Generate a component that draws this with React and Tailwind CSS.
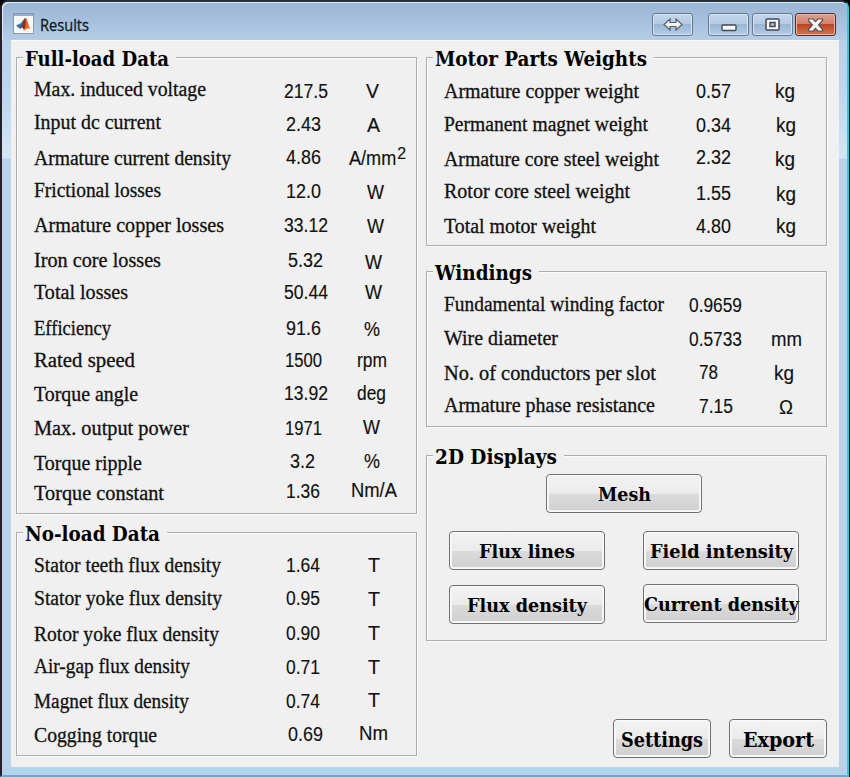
import { useLayoutEffect, useRef, useState } from "react";

const SERIF = "font-['Liberation_Serif',serif] text-[20px]";
const SANS = "font-['Liberation_Sans',sans-serif] text-[19.5px] [-webkit-text-stroke:0.15px_#111]";
const SLAB = "font-['DejaVu_Serif',serif] font-bold";

// Text condensed or widened horizontally to fill a given width.
function Fit({ w, className = "", children }) {
  const ref = useRef(null);
  const [scale, setScale] = useState(1);
  useLayoutEffect(() => {
    ref.current.style.transform = "none";
    const s = w / ref.current.getBoundingClientRect().width;
    ref.current.style.transform = `scaleX(${s})`;
    setScale(s);
  }, [w]);
  return (
    <span className="inline-block text-left" style={{ width: w }}>
      <span
        ref={ref}
        className={`inline-block origin-left whitespace-nowrap ${className}`}
        style={{ transform: `scaleX(${scale})` }}
      >
        {children}
      </span>
    </span>
  );
}

// label, width, baseline | value, x, width, baseline | unit, x, width, baseline
const fullLoad = [
  ["Max. induced voltage", 172, 96, "217.5", 284, 44, 98, "V", 366, 13, 98],
  ["Input dc current", 127, 129, "2.43", 286, 35, 131, "A", 367, 13, 132],
  ["Armature current density", 197, 165, "4.86", 286, 35, 164, "A/mm2", 349, 57, 165],
  ["Frictional losses", 127, 197, "12.0", 286, 35, 198, "W", 367, 17, 199],
  ["Armature copper losses", 190, 232, "33.12", 284, 44, 232, "W", 367, 17, 233],
  ["Iron core losses", 127, 267, "5.32", 288, 35, 267, "W", 365, 17, 269],
  ["Total losses", 94, 299, "50.44", 284, 44, 299, "W", 365, 17, 299],
  ["Efficiency", 77, 335, "91.6", 286, 35, 335, "%", 364, 16, 336],
  ["Rated speed", 101, 367, "1500", 285, 37, 367, "rpm", 357, 30, 367],
  ["Torque angle", 104, 401, "13.92", 284, 44, 400, "deg", 357, 29, 400],
  ["Max. output power", 155, 435, "1971", 285, 37, 435, "W", 363, 17, 434],
  ["Torque ripple", 108, 470, "3.2", 290, 25, 468, "%", 364, 16, 468],
  ["Torque constant", 130, 500, "1.36", 286, 34, 498, "Nm/A", 351, 46, 497],
];
const noLoad = [
  ["Stator teeth flux density", 187, 572, "1.64", 286, 34, 572, "T", 368, 12, 572],
  ["Stator yoke flux density", 188, 605, "0.95", 286, 34, 605, "T", 368, 12, 606],
  ["Rotor yoke flux density", 185, 641, "0.90", 286, 34, 640, "T", 368, 12, 640],
  ["Air-gap flux density", 156, 673, "0.71", 286, 34, 674, "T", 368, 12, 674],
  ["Magnet flux density", 155, 708, "0.74", 286, 34, 708, "T", 368, 12, 707],
  ["Cogging torque", 123, 742, "0.69", 288, 35, 741, "Nm", 359, 29, 740],
];
const weights = [
  ["Armature copper weight", 195, 98, "0.57", 696, 35, 98, "kg", 775, 20, 98],
  ["Permanent magnet weight", 204, 131, "0.34", 696, 35, 132, "kg", 776, 20, 132],
  ["Armature core steel weight", 215, 166, "2.32", 696, 35, 164, "kg", 775, 20, 166],
  ["Rotor core steel weight", 186, 198, "1.55", 696, 35, 200, "kg", 776, 20, 201],
  ["Total motor weight", 152, 233, "4.80", 696, 35, 233, "kg", 776, 20, 233],
];
const windings = [
  ["Fundamental winding factor", 220, 311, "0.9659", 689, 53, 312, "", 775, 0, 311],
  ["Wire diameter", 114, 345, "0.5733", 689, 53, 346, "mm", 771, 31, 346],
  ["No. of conductors per slot", 212, 380, "78", 699, 19, 379, "kg", 774, 20, 380],
  ["Armature phase resistance", 211, 412, "7.15", 699, 34, 413, "Ω", 779, 14, 414],
];

function Rows({ rows, left }) {
  return rows.map((r, i) => {
    const [label, lw, lb, value, vx, vw, vb, unit, ux, uw, ub] = r;
    const next = rows[i + 1];
    return (
      <div key={label} className="flex items-start leading-6 text-[#111]" style={{ height: (next ? next[2] : lb + 28) - lb }}>
        <div className="h-6 shrink-0 pt-[5px]" style={{ width: vx - left }}>
          <Fit w={lw} className={`${SERIF} [-webkit-text-stroke:0.3px_#111]`}>{label}</Fit>
        </div>
        <div className="h-6 shrink-0" style={{ width: ux - vx, marginTop: vb - lb + 5 }}>
          <Fit w={vw} className={SANS}>{value}</Fit>
        </div>
        {unit && (
          <div className="h-6" style={{ marginTop: ub - lb + 5 }}>
            <Fit w={uw} className={SANS}>
              {unit === "A/mm2" ? (
                <>A/mm<sup className="-top-[6px] ml-px text-[17px] leading-[0]">2</sup></>
              ) : unit}
            </Fit>
          </div>
        )}
      </div>
    );
  });
}

function Panel({ title, tw, className, children }) {
  return (
    <section className={`relative w-[401px] border border-[#adadad] shadow-[inset_1px_1px_0_#fbfbfb,1px_1px_0_#fbfbfb] ${className}`}>
      <h2 className={`absolute -top-[13px] left-[6px] h-7 bg-[#f0f0f0] pl-[2px] pr-[7px] text-[20px] leading-7 text-black ${SLAB}`}>
        <Fit w={tw}>{title}</Fit>
      </h2>
      {children}
    </section>
  );
}

function Button({ children, tw, className }) {
  return (
    <button className={`flex h-[39px] items-center justify-center rounded-[4px] border border-[#707070] bg-[linear-gradient(#f3f3f3,#ebebeb_50%,#dbdbdb_51%,#cfcfcf)] pt-[2px] text-black shadow-[inset_0_0_0_1px_#fbfbfb,inset_0_0_0_2px_#f3f3f3] ${SLAB} ${className}`}>
      <Fit w={tw}>{children}</Fit>
    </button>
  );
}

const caption = "flex h-[23px] w-[41px] items-center justify-center rounded-[3px] border border-[#66788f] bg-[linear-gradient(#c3d6eb,#b4cae3_48%,#9bb5d3_50%,#b3cde8)] shadow-[inset_0_0_0_1px_#d5e4f3]";

export default function App() {
  return (
    <div className="h-[777px] w-[850px] overflow-hidden bg-black">
      <div className="flex h-[777px] w-[849px] flex-col rounded-t-[8px] border-b-2 border-l-2 border-r-2 border-t-2 border-b-[#16cfe0] border-l-[#231f2b] border-r-[#20cfe0] border-t-[#27313d] bg-[#b9d1ea]">
        <header className="flex h-[38px] shrink-0 items-start rounded-t-[6px] bg-[linear-gradient(#9bb5d5,#a2bcda_35%,#b5cde7)] pl-[11px] pt-[11px] shadow-[inset_1px_1px_0_#e2edf7]">
          <svg width="21" height="21" viewBox="0 0 21 21" className="shrink-0">
            <rect x=".5" y=".5" width="20" height="20" fill="#f8f8f8" stroke="#8799ab" />
            <path d="M1 1h19v2H1z" fill="#8eafd0" />
            <path d="M3 12.5l5-2.5 4-5-2 9-3 2z" fill="#337ba9" />
            <path d="M6.500 15c3-2 4-10 6-10l1.500 7-3 5-2-3z" fill="#86312b" />
            <path d="M12.500 5c2 0 3 8 5 11-3-2-4 0-7 2 2-4 3-8 2-13z" fill="#e66b20" />
          </svg>
          <h1 className="ml-[6px] mt-[2px] h-5 font-['Open_Sans',sans-serif] text-[16px] leading-5 text-[#101820] [-webkit-text-stroke:0.3px_#101820]">
            <Fit w={49}>Results</Fit>
          </h1>
          <div className="ml-auto flex pr-[11px]">
            <button aria-label="Resize" className={`${caption} mr-[15px]`}>
              <svg width="20" height="13" viewBox="0 0 20 13"><path d="M1 6.500l6-5.500v3.500h6V1l6 5.500-6 5.500V8.500H7V12z" fill="#f5f5f5" stroke="#58606b" strokeWidth="1.2" /></svg>
            </button>
            <button aria-label="Minimize" className={`${caption} mr-[3px]`}>
              <svg width="16" height="14" viewBox="0 0 16 14"><rect x="1" y="7" width="14" height="5.500" rx="1" fill="#f8f8f8" stroke="#454a54" strokeWidth="1.4" /></svg>
            </button>
            <button aria-label="Maximize" className={`${caption} mr-[2px] border-[#8da2bb]`}>
              <svg width="15" height="13" viewBox="0 0 15 13"><rect x="1" y="1" width="13" height="11" rx="1" fill="#f8f8f8" stroke="#454a54" strokeWidth="1.5" /><rect x="5" y="4.500" width="5" height="4" fill="#a9bfda" stroke="#454a54" strokeWidth="1.5" /></svg>
            </button>
            <button aria-label="Close" className="flex h-[23px] w-[41px] items-center justify-center rounded-[3px] border border-[#552c2c] bg-[linear-gradient(#dda291,#cf806b_48%,#b94525_50%,#ce7650)] shadow-[inset_0_0_0_1px_#e6b6a4]">
              <svg width="17" height="14" viewBox="0 0 17 14"><path d="M1.500 1h4.500l2.500 2.700L11 1h4.500v1.500L11.500 7l4 4.500V13H11l-2.500-2.700L6 13H1.500v-1.500l4-4.500-4-4.500z" fill="#fafafa" stroke="#575261" strokeWidth="1.2" /></svg>
            </button>
          </div>
        </header>
        <div className="flex h-[735px] shrink-0 bg-[linear-gradient(#b7cfe8,#c0d8ee_60px,#d3e6f5_118px,#b9d1ea_119px)] pb-[8px] pl-[9px] pr-[8px]">
          <main className="flex flex-1 bg-[#f0f0f0] pl-[5px] pt-[17px] shadow-[inset_0_1px_0_#fafafa]">
            <div className="mr-[9px]">
              <Panel title="Full-load Data" tw={144} className="mb-[18px] h-[457px] pl-[17px] pt-[14px]">
                <Rows rows={fullLoad} left={34} />
              </Panel>
              <Panel title="No-load Data" tw={135} className="h-[224px] pl-[17px] pt-[15px]">
                <Rows rows={noLoad} left={34} />
              </Panel>
            </div>
            <div>
              <Panel title="Motor Parts Weights" tw={212} className="mb-[25px] h-[189px] pl-[17px] pt-[16px]">
                <Rows rows={weights} left={444} />
              </Panel>
              <Panel title="Windings" tw={97} className="mb-[28px] h-[156px] pl-[17px] pt-[15px]">
                <Rows rows={windings} left={444} />
              </Panel>
              <Panel title="2D Displays" tw={122} className="mb-[78px] h-[186px] pl-[22px] pt-[18px]">
                <Button tw={53} className="ml-[97px] w-[156px] text-[18px]">Mesh</Button>
                <div className="mt-[18px] flex gap-[38px]">
                  <div className="flex flex-col gap-[15px]">
                    <Button tw={96} className="w-[156px] text-[18px]">Flux lines</Button>
                    <Button tw={120} className="w-[156px] text-[18px]">Flux density</Button>
                  </div>
                  <div className="flex flex-col gap-[14px]">
                    <Button tw={143} className="w-[156px] text-[18px]">Field intensity</Button>
                    <Button tw={155} className="w-[156px] text-[18px]">Current density</Button>
                  </div>
                </div>
              </Panel>
              <div className="flex gap-[18px] pl-[187px]">
                <Button tw={82} className="w-[98px] text-[20px]">Settings</Button>
                <Button tw={71} className="w-[98px] text-[20px]">Export</Button>
              </div>
            </div>
          </main>
        </div>
      </div>
    </div>
  );
}
